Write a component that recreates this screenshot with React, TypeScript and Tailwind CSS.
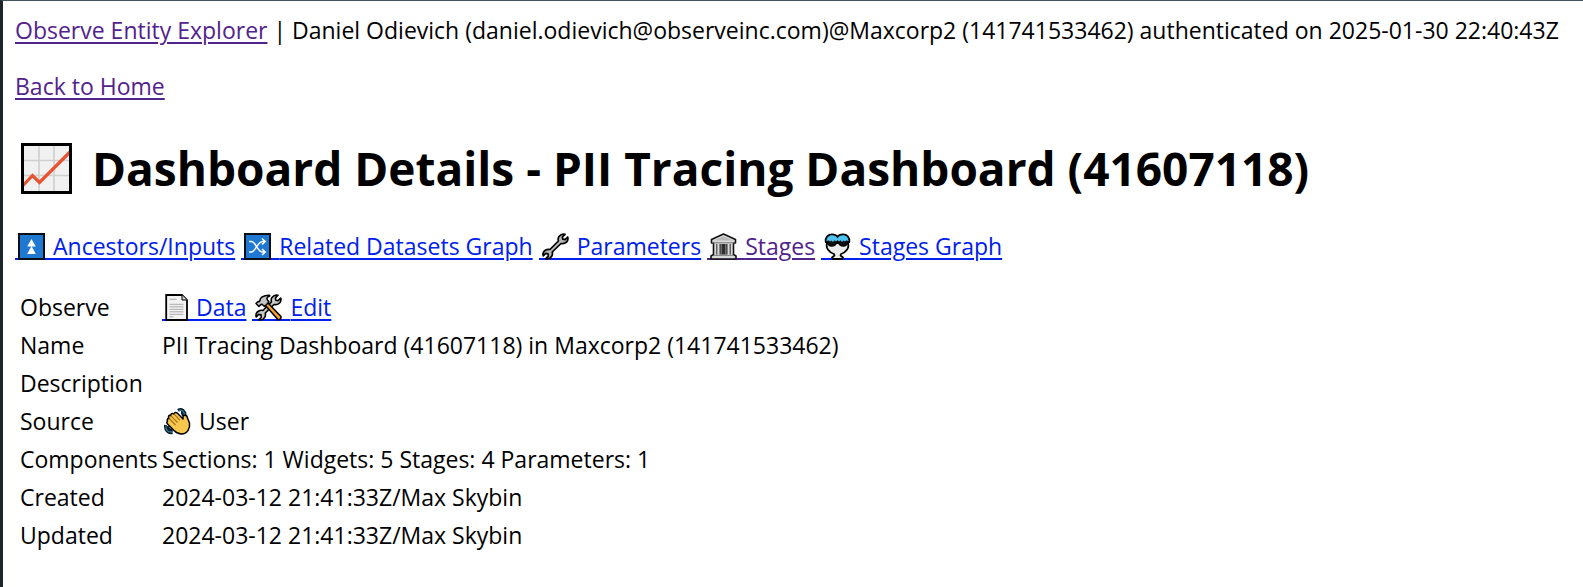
import type { ReactNode } from "react";

function ChartIcon() {
  return (
    <svg viewBox="0 0 51 51" className="block size-full" aria-hidden="true">
      <rect x="1.5" y="1.5" width="48" height="48" fill="#f1f1f1" />
      <path d="M18 2v47M33 2v47M2 17.5h47M2 32.5h47" stroke="#cfcfcf" strokeWidth="1.6" />
      <path d="M2 42.5 11.5 32.500 18.500 39.500 49 9" fill="none" stroke="#e8522e" strokeWidth="3.2" />
      <rect x="1.5" y="1.5" width="48" height="48" fill="none" stroke="#000" strokeWidth="3" />
    </svg>
  );
}

function UpIcon() {
  return (
    <svg viewBox="0 0 27 27" className="block size-full" aria-hidden="true">
      <rect x="1" y="1" width="25" height="25" fill="#1f78d1" stroke="#0b0f14" strokeWidth="2" />
      <path d="M13.5 6 17.8 13.5H9.2ZM13.5 13 17.8 21H9.2Z" fill="#fff" />
    </svg>
  );
}

function ShuffleIcon() {
  return (
    <svg viewBox="0 0 27 27" className="block size-full" aria-hidden="true">
      <rect x="1" y="1" width="25" height="25" fill="#1f78d1" stroke="#0b0f14" strokeWidth="2" />
      <path
        d="M5 8.5h2.500c4 0 6 10.500 11 10.500h2M5 19h2.500c4 0 6-10.500 11-10.500h2M18 5.500l3.200 3-3.200 3M18 16l3.200 3-3.200 3"
        fill="none"
        stroke="#fff"
        strokeWidth="1.5"
      />
    </svg>
  );
}

const wrenchPath =
  "M17 3.5C18.5 1.6 21 .8 23 1.3L20.4 4 20.8 6.2 23 6.6 25.7 4C26.3 6.5 25.2 9 23 10.1 21.6 10.8 20 10.7 19 10.5L10.3 19C10.6 20.5 10.5 22 9.7 23.3 8.4 25.4 6 26.3 3.8 25.7L6.3 23.2 6 20.9 3.7 20.4 1.2 22.9C.6 20.6 1.6 18.2 3.7 17 5 16.3 6.6 16.2 7.9 16.5L16.4 8C16 6.5 16.1 4.8 17 3.5Z";

function WrenchIcon() {
  return (
    <svg viewBox="0 0 27 27" className="block size-full" aria-hidden="true">
      <path d={wrenchPath} fill="#b5b5b5" stroke="#000" strokeWidth="1.7" strokeLinejoin="round" />
    </svg>
  );
}

function BuildingIcon() {
  return (
    <svg viewBox="0 0 27 27" className="block size-full" aria-hidden="true">
      <path
        d="M13.5 1 25.5 6.5V10H23.5V21.5L26 23V26H1V23L3.5 21.5V10H1.5V6.5Z"
        fill="#dadada"
        stroke="#111"
        strokeWidth="1.6"
        strokeLinejoin="round"
      />
      <path d="M4 7.5 13.5 3.2 23 7.5Z" fill="#b9b9b9" />
      <path d="M2 9.8h23M3.5 22.3h20" stroke="#777" strokeWidth="1" />
      <path d="M6.8 11v10.500M20.200 11v10.500" stroke="#444" strokeWidth="1.2" />
      <path d="M9.5 11h8v10.500h-8z" fill="#2f2f2f" />
      <path d="M11.200 11v10.500M15.800 11v10.500" stroke="#8b8b8b" strokeWidth="1" />
    </svg>
  );
}

function BowlIcon() {
  return (
    <svg viewBox="0 0 27 27" className="block size-full" aria-hidden="true">
      <path
        d="M3 10H24C25.5 15 22 19.500 17 21L16.500 22.500 19 24.500 18 26H9L8 24.500 10.500 22.500 10 21C5 19.500 1.500 15 3 10Z"
        fill="#ececec"
        stroke="#000"
        strokeWidth="1.8"
        strokeLinejoin="round"
      />
      <path
        d="M1.5 9C1 4 4 1.200 8 1.200 10.500 1.200 12.500 2 13.500 3.500 14.500 2 16.500 1.200 19 1.200 23 1.200 26 4 25.500 9L23.500 10Q22.500 13 19.500 13 15.500 13 14.500 9.500L13.500 8.500 12.500 9.500Q11.500 13 7.500 13 4.500 13 3.500 10Z"
        fill="#101010"
        stroke="#000"
        strokeWidth="1.4"
        strokeLinejoin="round"
      />
      <path
        d="M2.500 8.300C2.500 4.500 5 2.300 8 2.300 10.500 2.300 12.500 3.500 13.500 5.500 14.500 3.500 16.500 2.300 19 2.300 22 2.300 24.500 4.500 24.500 8.300L22.500 7.300 21 8.500 19.500 7.500 18 9 16.500 7.300 15 8.500 13.500 7 12 8.500 10.500 7.300 9 9 7.500 7.500 6 8.500 4.500 7.300Z"
        fill="#4fc3f0"
      />
    </svg>
  );
}

function PageIcon() {
  return (
    <svg viewBox="0 0 27 27" className="block size-full" aria-hidden="true">
      <path d="M1.200 1H17L22 6V26H1.200Z" fill="#f3f3f3" stroke="#000" strokeWidth="1.8" />
      <path d="M17 1V6H22" fill="#cfcfcf" stroke="#000" strokeWidth="1" />
      <path
        d="M4.500 5.300h7M4.500 10.300h14M4.500 12.800h14M4.500 15.300h14M4.500 17.800h14M4.500 20.300h14M4.500 22.800h4"
        stroke="#a9a9a9"
        strokeWidth="1"
      />
    </svg>
  );
}

function ToolsIcon() {
  return (
    <svg viewBox="0 0 27 27" className="block size-full" aria-hidden="true">
      <path d={wrenchPath} fill="#c8c8c8" stroke="#000" strokeWidth="1.6" strokeLinejoin="round" />
      <path
        d="M10 11 12.500 8.500 26 22.500Q26.300 25.500 23.300 26Z"
        fill="#f0a030"
        stroke="#000"
        strokeWidth="1.5"
        strokeLinejoin="round"
      />
      <path
        d="M1 9.500 3 7.500 4 7.800 5 6.500C4.800 4 8 1.300 14 1.200 15 1.300 15 2 14.200 2.400 12 3 11.500 4.500 12.500 6L14 8 9.500 12.500 7 10.200 5.800 10.500 4 12.500Z"
        fill="#c4c4c4"
        stroke="#000"
        strokeWidth="1.5"
        strokeLinejoin="round"
      />
    </svg>
  );
}

function WaveIcon() {
  return (
    <svg viewBox="0 0 27 27" className="block size-full" aria-hidden="true">
      <path
        d="M14 2.500C17.500 0 21.500 3 21 8M17 4.500C18.500 4.500 19.500 6 19 8M1.500 17C1 22 4 25.500 8.500 24.500M4 18C3.500 21 6 23 8.500 22"
        fill="none"
        stroke="#061d28"
        strokeWidth="3"
      />
      <path
        d="M14.500 2.500C17.500 1 20.500 3.500 20.500 7.500M2 18C1.500 21.500 4 24.700 8 23.800"
        fill="none"
        stroke="#357f9f"
        strokeWidth="1.2"
      />
      <path
        d="M3.500 13C2.500 11.500 4 10 5.200 10.500 3.500 8.500 5 6.700 6.700 7.700 6.500 5.500 8.500 4.800 10 6 10.500 4.300 12.200 4 13.500 5.300L19 11V9C19 6.500 23 6.500 23.300 9.500L25.500 15C26.300 20 23.500 26 17.500 26 14 26 12 24.500 10 22.500L4 16.500C2.800 15.500 2.700 14 3.500 13Z"
        fill="#f8c84e"
        stroke="#000"
        strokeWidth="1.5"
        strokeLinejoin="round"
      />
      <path d="M5.200 10.500 11.500 17M6.700 7.700 13.500 14.500M10 6 16 12.300" fill="none" stroke="#a87418" strokeWidth="1.2" />
    </svg>
  );
}

/* The rule under the icon carries on from the underline of the label. */
function IconLink({
  icon,
  visited = false,
  narrow = false,
  children,
}: {
  icon: ReactNode;
  visited?: boolean;
  narrow?: boolean;
  children: ReactNode;
}) {
  return (
    <a href="#" className={visited ? "text-[#52238c]" : "text-[#0020ec]"}>
      <span
        className={`${narrow ? "w-[34px]" : "w-[38px]"} inline-block h-[30px] border-b-2 border-current pl-[3px] align-[-5px]`}
      >
        <span className="mt-[3px] block size-[27px]">{icon}</span>
      </span>
      <span className="underline decoration-2 underline-offset-3">{children}</span>
    </a>
  );
}

function Row({ label, children }: { label: string; children?: ReactNode }) {
  return (
    <tr className="h-[38px]">
      <th scope="row" className="w-[142px] p-0 text-left font-normal">
        {label}
      </th>
      <td className="p-0">{children}</td>
    </tr>
  );
}

export default function App() {
  return (
    <div className="min-h-screen border-t border-l-3 border-t-[#43525c] border-l-[#1c252c] bg-white pt-[13px] pr-3 pl-3 font-['Open_Sans','Noto_Sans',sans-serif] text-[23px] leading-8 text-black">
      <header>
        <a href="#" className="text-[#52238c] underline decoration-2 underline-offset-3">
          Observe Entity Explorer
        </a>{" "}
        | Daniel Odievich (daniel.odievich@observeinc.com)@Maxcorp2 (141741533462) authenticated on 2025-01-30 22:40:43Z
      </header>
      <p className="mt-6">
        <a href="#" className="text-[#52238c] underline decoration-2 underline-offset-3">
          Back to Home
        </a>
      </p>
      <h1 className="mt-[34px] flex items-center gap-5 pl-[6px] text-[46px] leading-[64px] font-bold">
        <span className="size-[51px] shrink-0">
          <ChartIcon />
        </span>
        Dashboard Details - PII Tracing Dashboard (41607118)
      </h1>
      <nav className="mt-[30px] flex flex-wrap gap-x-[6px]">
        <IconLink icon={<UpIcon />}>Ancestors/Inputs</IconLink>
        <IconLink icon={<ShuffleIcon />}>Related Datasets Graph</IconLink>
        <IconLink icon={<WrenchIcon />}>Parameters</IconLink>
        <IconLink icon={<BuildingIcon />} visited>
          Stages
        </IconLink>
        <IconLink icon={<BowlIcon />}>Stages Graph</IconLink>
      </nav>
      <table className="mt-[26px] ml-[5px] border-collapse">
        <tbody>
          <Row label="Observe">
            <div className="flex gap-[6px]">
              <IconLink icon={<PageIcon />} narrow>
                Data
              </IconLink>
              <IconLink icon={<ToolsIcon />}>Edit</IconLink>
            </div>
          </Row>
          <Row label="Name">PII Tracing Dashboard (41607118) in Maxcorp2 (141741533462)</Row>
          <Row label="Description" />
          <Row label="Source">
            <div className="flex items-center gap-2 pl-[2px]">
              <span className="size-[27px]">
                <WaveIcon />
              </span>
              User
            </div>
          </Row>
          <Row label="Components">Sections: 1 Widgets: 5 Stages: 4 Parameters: 1</Row>
          <Row label="Created">2024-03-12 21:41:33Z/Max Skybin</Row>
          <Row label="Updated">2024-03-12 21:41:33Z/Max Skybin</Row>
        </tbody>
      </table>
    </div>
  );
}
